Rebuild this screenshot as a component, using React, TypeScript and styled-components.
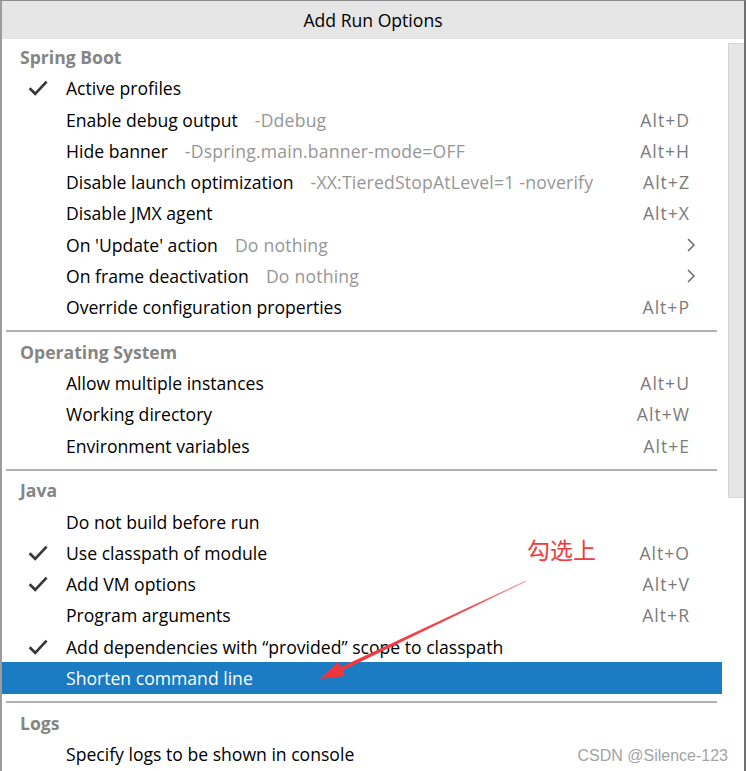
import styled, { createGlobalStyle } from "styled-components";

// Global Styles
const GlobalStyle = createGlobalStyle`
  html, body {
    margin: 0;
    padding: 0;
    background: #ffffff;
    overflow: hidden;
  }
  body {
    font-family: "Open Sans", "Noto Sans", "Noto Sans CJK SC", sans-serif;
  }
`;

// Styled Components
const Window = styled.div`
  position: relative;
  width: 746px;
  height: 771px;
  box-sizing: border-box;
  border-top: 1px solid #8c8c8c;
  border-left: 2px solid #9c9c9c;
  border-right: 2px solid #6f6f6f;
  display: flex;
  flex-direction: column;
  overflow: hidden;
  background: #ffffff;
`;

const TitleBar = styled.div`
  height: 38px;
  flex-shrink: 0;
  background: #e6e6e6;
  display: flex;
  align-items: center;
  justify-content: center;
  font-size: 17.6px;
  color: #000000;
`;

const Body = styled.div`
  flex: 1;
  display: flex;
  min-height: 0;
`;

const List = styled.div`
  width: 720px;
  padding-top: 2.5px;
  display: flex;
  flex-direction: column;
`;

const ScrollTrack = styled.div`
  flex: 1;
  padding: 4px 0 0 6px;
`;

const ScrollThumb = styled.div`
  width: 16px;
  height: 455px;
  box-sizing: border-box;
  background: #e6e6e6;
  border: 1px solid #d6d6d6;
  border-right: none;
`;

const SectionHeader = styled.div`
  height: 31.25px;
  display: flex;
  align-items: center;
  padding-left: 18px;
  font-size: 17.6px;
  font-weight: 700;
  color: #858585;
`;

const Separator = styled.div`
  margin: 7.5px 5px 4px 4px;
  height: 2px;
  background: #b1b1b1;
`;

const Row = styled.div<{ $selected?: boolean }>`
  height: 31.25px;
  display: flex;
  align-items: center;
  font-size: 17.6px;
  color: ${(p) => (p.$selected ? "#ffffff" : "#000000")};
  background: ${(p) => (p.$selected ? "#1b7bc3" : "transparent")};
  white-space: nowrap;
`;

const CheckCell = styled.div`
  width: 64px;
  flex-shrink: 0;
  display: flex;
  align-items: center;
  padding-left: 26px;
  box-sizing: border-box;
`;

const Label = styled.span``;

const Hint = styled.span`
  margin-left: 17px;
  color: #969696;
  letter-spacing: 0.2px;
`;

const Spacer = styled.div`
  flex: 1;
`;

const Shortcut = styled.span`
  margin-right: 32px;
  color: #7b7b7b;
  letter-spacing: 1px;
`;

const SubmenuArrow = styled.span`
  display: flex;
  margin-right: 26px;
`;

const Note = styled.div`
  position: absolute;
  left: 525px;
  top: 537px;
  font-family: "Noto Sans CJK SC", sans-serif;
  font-size: 23px;
  line-height: 1;
  color: #f03a3e;
`;

const ArrowLayer = styled.svg`
  position: absolute;
  left: 0;
  top: 0;
  pointer-events: none;
`;

const Watermark = styled.div`
  position: absolute;
  right: 16px;
  bottom: 6px;
  font-family: "Liberation Sans", Arial, sans-serif;
  font-size: 16px;
  color: #a3a3a3;
  text-shadow: 0 0 1px #ffffff;
`;

// Data
type Item = {
  label: string;
  hint?: string;
  shortcut?: string;
  checked?: boolean;
  submenu?: boolean;
  selected?: boolean;
};

type Section = { title: string; items: Item[] };

const sections: Section[] = [
  {
    title: "Spring Boot",
    items: [
      { label: "Active profiles", checked: true },
      { label: "Enable debug output", hint: "-Ddebug", shortcut: "Alt+D" },
      { label: "Hide banner", hint: "-Dspring.main.banner-mode=OFF", shortcut: "Alt+H" },
      {
        label: "Disable launch optimization",
        hint: "-XX:TieredStopAtLevel=1 -noverify",
        shortcut: "Alt+Z",
      },
      { label: "Disable JMX agent", shortcut: "Alt+X" },
      { label: "On 'Update' action", hint: "Do nothing", submenu: true },
      { label: "On frame deactivation", hint: "Do nothing", submenu: true },
      { label: "Override configuration properties", shortcut: "Alt+P" },
    ],
  },
  {
    title: "Operating System",
    items: [
      { label: "Allow multiple instances", shortcut: "Alt+U" },
      { label: "Working directory", shortcut: "Alt+W" },
      { label: "Environment variables", shortcut: "Alt+E" },
    ],
  },
  {
    title: "Java",
    items: [
      { label: "Do not build before run" },
      { label: "Use classpath of module", checked: true, shortcut: "Alt+O" },
      { label: "Add VM options", checked: true, shortcut: "Alt+V" },
      { label: "Program arguments", shortcut: "Alt+R" },
      {
        label: "Add dependencies with \u201cprovided\u201d scope to classpath",
        checked: true,
      },
      { label: "Shorten command line", selected: true },
    ],
  },
  {
    title: "Logs",
    items: [{ label: "Specify logs to be shown in console" }],
  },
];

function CheckIcon() {
  return (
    <svg width="20" height="16" viewBox="0 0 20 16">
      <path
        d="M1.6 8.2 L7.2 13.8 L18.6 1.6"
        fill="none"
        stroke="#383838"
        strokeWidth="2.7"
      />
    </svg>
  );
}

function ChevronIcon() {
  return (
    <svg width="10" height="14" viewBox="0 0 10 14">
      <path d="M2 1 L8 7 L2 13" fill="none" stroke="#6c6c6c" strokeWidth="1.5" />
    </svg>
  );
}

// Red annotation arrow, tapered from its tail to the head
function Annotation() {
  return (
    <ArrowLayer width="746" height="771" viewBox="0 0 746 771">
      <defs>
        <linearGradient id="arrowFade" x1="524" y1="580" x2="318" y2="678" gradientUnits="userSpaceOnUse">
          <stop offset="0" stopColor="#f6a0a8" />
          <stop offset="0.25" stopColor="#f24a52" />
          <stop offset="1" stopColor="#f0333b" />
        </linearGradient>
      </defs>
      <polygon
        points="524.2,580.5 340.6,669.5 343.1,674.9 318,678 336.3,660.5 338.8,665.9 523.8,579.5"
        fill="url(#arrowFade)"
      />
    </ArrowLayer>
  );
}

// Component Function
export default function App() {
  return (
    <>
      <GlobalStyle />
      <Window>
        <TitleBar>Add Run Options</TitleBar>
        <Body>
          <List>
            {sections.map((section, i) => (
              <div key={section.title}>
                {i > 0 && <Separator />}
                <SectionHeader>{section.title}</SectionHeader>
                {section.items.map((item) => (
                  <Row key={item.label} $selected={item.selected}>
                    <CheckCell>{item.checked && <CheckIcon />}</CheckCell>
                    <Label>{item.label}</Label>
                    {item.hint && <Hint>{item.hint}</Hint>}
                    <Spacer />
                    {item.shortcut && <Shortcut>{item.shortcut}</Shortcut>}
                    {item.submenu && (
                      <SubmenuArrow>
                        <ChevronIcon />
                      </SubmenuArrow>
                    )}
                  </Row>
                ))}
              </div>
            ))}
          </List>
          <ScrollTrack>
            <ScrollThumb />
          </ScrollTrack>
        </Body>
        <Note>勾选上</Note>
        <Annotation />
        <Watermark>CSDN @Silence-123</Watermark>
      </Window>
    </>
  );
}
